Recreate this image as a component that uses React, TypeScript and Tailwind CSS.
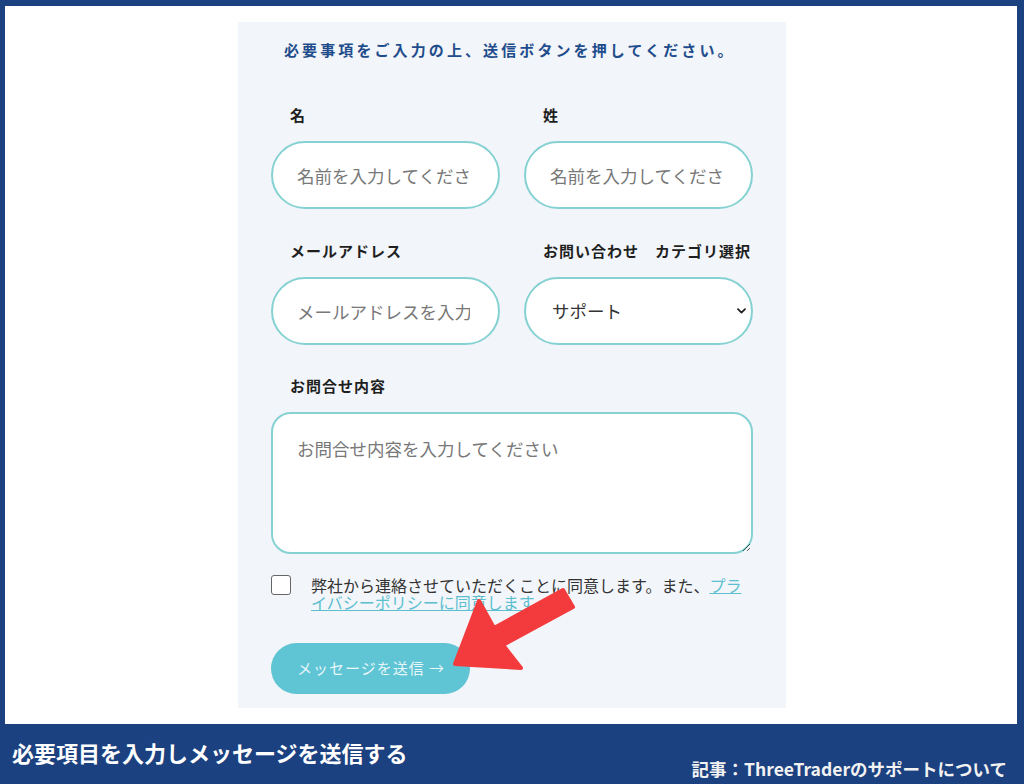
import React from 'react';

const jp = "font-['Noto_Sans_CJK_JP','Noto_Sans',sans-serif]";

const Label: React.FC<{ children: React.ReactNode }> = ({ children }) => (
  <div className="pl-[19px] text-[15px] leading-[20px] font-bold tracking-[1px] text-[#1f1f1f]">{children}</div>
);

const TextInput: React.FC<{ placeholder: string }> = ({ placeholder }) => (
  <input
    type="text"
    placeholder={placeholder}
    className="mt-[16px] w-full h-[68px] rounded-full border-2 border-[#86d2d3] bg-white pl-[24px] pr-[28px] text-[17.5px] text-[#333] placeholder:text-[#787878] outline-none"
  />
);

export default function App() {
  return (
    <div className={`w-[1024px] h-[784px] bg-[#1c4180] flex flex-col ${jp}`}>
      <div className="ml-[5px] mr-[7px] mt-[6px] h-[718px] bg-white pl-[233px] pt-[16px]">
        <div className="relative w-[548px] h-[686px] bg-[#f2f5f9] pt-[16px] px-[33px]">
          <h2 className="pl-[13px] text-[15px] leading-[24px] font-bold tracking-[3.1px] text-[#1f4d8c]">
            必要事項をご入力の上、送信ボタンを押してください。
          </h2>

          <div className="mt-[43px] grid grid-cols-2 gap-x-[24px]">
            <div>
              <Label>名</Label>
              <TextInput placeholder="名前を入力してください" />
            </div>
            <div>
              <Label>姓</Label>
              <TextInput placeholder="名前を入力してください" />
            </div>
          </div>

          <div className="mt-[32px] grid grid-cols-2 gap-x-[24px]">
            <div>
              <Label>メールアドレス</Label>
              <TextInput placeholder="メールアドレスを入力してください" />
            </div>
            <div>
              <Label>お問い合わせ　カテゴリ選択</Label>
              <div className="relative mt-[16px]">
                <select className="w-full h-[68px] appearance-none rounded-full border-2 border-[#86d2d3] bg-white pl-[26px] text-[17.5px] text-[#333] outline-none">
                  <option>サポート</option>
                  <option>口座開設</option>
                  <option>その他</option>
                </select>
                <svg className="absolute right-[7px] top-[31px] w-[9px] h-[6px] pointer-events-none" viewBox="0 0 9 6">
                  <path d="M1 1.2 L4.5 4.6 L8 1.2" fill="none" stroke="#222" strokeWidth="1.8" strokeLinecap="round" strokeLinejoin="round" />
                </svg>
              </div>
            </div>
          </div>

          <div className="mt-[31px]">
            <Label>お問合せ内容</Label>
            <textarea
              placeholder="お問合せ内容を入力してください"
              className="mt-[16px] block w-full h-[142px] rounded-[20px] border-2 border-[#86d2d3] bg-white px-[24px] pt-[22px] text-[17.5px] text-[#333] placeholder:text-[#787878] outline-none"
            />
          </div>

          <div className="mt-[21px] flex items-start gap-[20px]">
            <span className="shrink-0 w-[20px] h-[20px] rounded-[3px] border-[1.5px] border-[#666] bg-white" />
            <p className="mt-[2px] text-[16px] leading-[17px] text-[#333]">
              弊社から連絡させていただくことに同意します。また、
              <a className="text-[#5cbfd0] underline">プライバシーポリシーに同意します</a>
            </p>
          </div>

          <button className="mt-[32px] w-[199px] h-[51px] rounded-full bg-[#5fc4d4] pl-[26px] text-left text-[15px] tracking-[1px] text-[#e8f7fa]">
            メッセージを送信 →
          </button>

          <svg className="absolute left-[210px] top-[560px] w-[135px] h-[95px] pointer-events-none" viewBox="0 0 135 95">
            <polygon
              points="7,82 31,19 46,46 115,8 125,25 55,63 73,86"
              fill="#f33a3c"
              stroke="#f33a3c"
              strokeWidth="4"
              strokeLinejoin="round"
            />
          </svg>
        </div>
      </div>

      <div className="flex-1 flex justify-between pl-[12px] pr-[17px]">
        <div className="self-start pt-[13px] text-[22px] leading-[30px] font-bold text-white">
          必要項目を入力しメッセージを送信する
        </div>
        <div className="self-end pb-[5px] text-[17.5px] leading-[20px] font-bold text-[#f2f2f2]">
          記事：ThreeTraderのサポートについて
        </div>
      </div>
    </div>
  );
}
